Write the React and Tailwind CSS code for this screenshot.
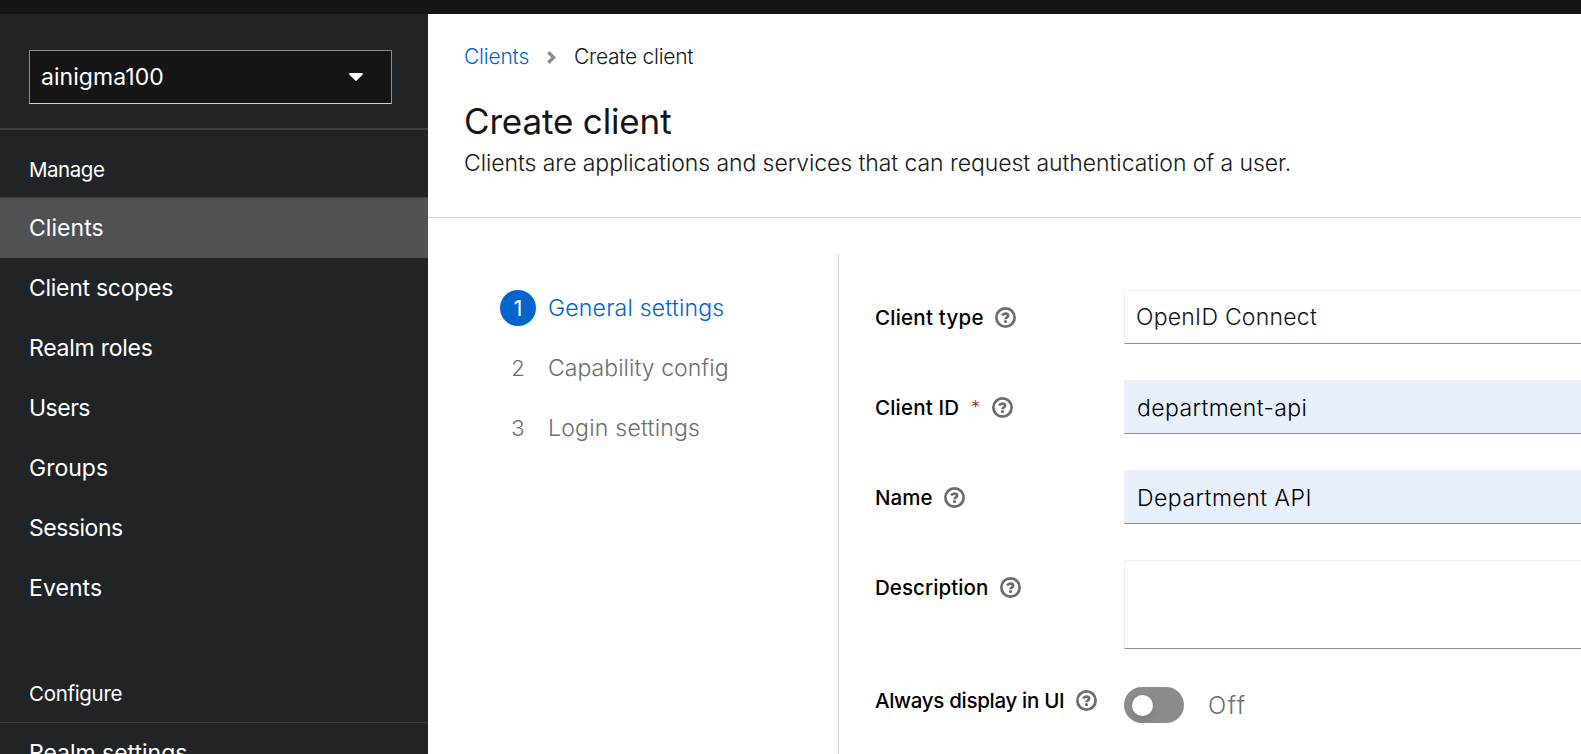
const manageItems = [
  { label: "Clients", tracking: "tracking-[0.05px]", active: true },
  { label: "Client scopes", tracking: "tracking-[-0.28px]" },
  { label: "Realm roles", tracking: "tracking-[-0.25px]" },
  { label: "Users", tracking: "tracking-[-0.5px]" },
  { label: "Groups", tracking: "tracking-[0px]" },
  { label: "Sessions", tracking: "tracking-[-0.48px]" },
  { label: "Events", tracking: "tracking-[0.08px]" },
];

const steps = [
  { n: 1, label: "General settings", tracking: "tracking-[0.21px]", active: true },
  { n: 2, label: "Capability config", tracking: "tracking-[0.05px]" },
  { n: 3, label: "Login settings", tracking: "tracking-[0.24px]" },
];

function HelpIcon() {
  return (
    <svg className="block h-[21px] w-[21px] shrink-0 text-[#6a6e73]" viewBox="0 0 21 21" fill="none">
      <circle cx="10.5" cy="10.5" r="9.15" stroke="currentColor" strokeWidth="2.7" />
      <path
        d="M7.2 8.5C7.8 7.3 8.9 6.7 10.4 6.7C12.1 6.7 13.1 7.5 13.1 8.7C13.1 10.4 10.5 10.3 10.5 12.3"
        stroke="currentColor"
        strokeWidth="2.7"
      />
      <rect x="9" y="13.3" width="3" height="2.8" rx="1" fill="currentColor" />
    </svg>
  );
}

function NavItem({ label, tracking, active }) {
  return (
    <a className={`block h-[60px] shrink-0 pl-[29px] text-[23px] leading-[60px] text-white ${tracking} ${active ? "bg-[#4f5255]" : ""}`}>
      {label}
    </a>
  );
}

function SectionTitle({ children, className }) {
  return (
    <h2 className={`shrink-0 border-b border-[#3c3f42] pl-[29px] text-[20.5px] leading-[30px] text-white ${className}`}>
      {children}
    </h2>
  );
}

function Sidebar() {
  return (
    <nav className="flex w-[428px] shrink-0 flex-col overflow-hidden bg-[#212427]">
      <div className="shrink-0 border-b-2 border-[#3c3f42] pt-[36px] pr-[36px] pb-[24px] pl-[29px]">
        <button className="flex h-[54px] w-full items-center justify-between border border-[#8a8d90] border-b-[#d2d2d2] bg-[#151515] pr-[28px] pl-[11px] text-[23px] leading-[52px] tracking-[0.05px] text-white">
          <span>ainigma100</span>
          <svg className="h-[8px] w-[14px]" viewBox="0 0 14 8">
            <path d="M0.9 0H13.1C13.9 0 14.3 0.9 13.7 1.5L7.7 7.6C7.3 8 6.7 8 6.3 7.6L0.3 1.5C-0.3 0.9 0.1 0 0.9 0Z" fill="#fff" />
          </svg>
        </button>
      </div>
      <SectionTitle className="pt-[25px] pb-[12px] tracking-[-0.46px]">Manage</SectionTitle>
      {manageItems.map((item) => (
        <NavItem key={item.label} {...item} />
      ))}
      <SectionTitle className="mt-[61px] pb-[13px] tracking-[-0.32px]">Configure</SectionTitle>
      <NavItem label="Realm settings" tracking="tracking-[-0.02px]" />
    </nav>
  );
}

function PageHeader() {
  return (
    <header className="h-[204px] shrink-0 border-b border-[#d2d2d2] pt-[28px] pl-[36px]">
      <div className="flex h-[30px] items-center text-[21px] font-light">
        <a className="w-[83px] pb-px leading-[29px] tracking-[-0.2px] text-[#0066cc]">Clients</a>
        <svg className="mr-[18px] h-[13px] w-[9px]" viewBox="0 0 9 13" fill="none">
          <path d="M1.3 1.2L6.7 6.5L1.3 11.8" stroke="#8a8d90" strokeWidth="3.3" />
        </svg>
        <span className="pb-px leading-[29px] tracking-[-0.28px] text-[#151515]">Create client</span>
      </div>
      <h1 className="mt-[26px] text-[35px] leading-[46px] font-normal tracking-[-0.15px] text-[#151515]">Create client</h1>
      <p className="mt-px text-[23px] leading-[36px] font-light tracking-[-0.07px] text-[#151515]">
        Clients are applications and services that can request authentication of a user.
      </p>
    </header>
  );
}

function Steps() {
  return (
    <ol className="flex w-[411px] shrink-0 flex-col gap-[24px] border-r border-[#d2d2d2] pt-[36px] pl-[72px]">
      {steps.map((s) => (
        <li key={s.n} className="flex h-[36px] items-center">
          <span className={`flex h-[36px] w-[36px] items-center justify-center rounded-full text-[22px] leading-[36px] ${s.active ? "bg-[#0066cc] text-white" : "font-light text-[#6a6e73]"}`}>
            {s.n}
          </span>
          <span className={`ml-[12px] text-[23px] leading-[36px] font-light ${s.tracking} ${s.active ? "text-[#0066cc]" : "text-[#6a6e73]"}`}>
            {s.label}
          </span>
        </li>
      ))}
    </ol>
  );
}

function Field({ label, labelClass, required, className = "h-[54px]", children }) {
  return (
    <div className={`flex shrink-0 ${className}`}>
      <div className="flex h-[55px] w-[249px] shrink-0 items-center">
        <label className={`shrink-0 text-[20.5px] leading-[30px] font-medium whitespace-nowrap text-black ${labelClass}`}>{label}</label>
        {required && <span className="w-[21px] shrink-0 text-[18px] leading-[30px] font-light text-[#c9190b]">*</span>}
        <HelpIcon />
      </div>
      {children}
    </div>
  );
}

const control = "min-w-0 flex-1 border border-r-0 border-[#f0f0f0] border-b-[#8a8d90] text-[23px] font-light whitespace-nowrap";

function Form() {
  return (
    <form className="flex min-w-0 flex-1 flex-col gap-[36px] pt-[36px] pl-[36px]">
      <Field label="Client type" labelClass="w-[120px] tracking-[0.24px]">
        <div className={`${control} pl-[11px] leading-[53px] tracking-[0.24px] text-[#151515]`}>OpenID Connect</div>
      </Field>
      <Field label="Client ID" labelClass="w-[96px] tracking-[0.19px]" required>
        <div className={`${control} bg-[#e8f0fe] pl-[12px] leading-[55px] tracking-[0.38px] text-black`}>department-api</div>
      </Field>
      <Field label="Name" labelClass="w-[69px] tracking-[0.05px]">
        <div className={`${control} bg-[#e8f0fe] pl-[12px] leading-[55px] tracking-[0.48px] text-black`}>Department API</div>
      </Field>
      <Field label="Description" labelClass="w-[125px] tracking-[0.07px]" className="h-[89px]">
        <div className={control} />
      </Field>
      <Field label="Always display in UI" labelClass="w-[201px] tracking-[-0.3px]" className="mt-[-12px] h-[55px]">
        <div className="flex items-center pt-[9px]">
          <span className="flex h-[36px] w-[60px] items-center rounded-full bg-[#8a8d90] pl-[8px]">
            <span className="h-[21px] w-[21px] rounded-full bg-white shadow-[0_4px_8px_rgba(3,3,3,0.14)]" />
          </span>
          <span className="ml-[24px] pt-px text-[24px] leading-[36px] font-light tracking-[1.5px] text-[#6a6e73]">Off</span>
        </div>
      </Field>
    </form>
  );
}

export default function App() {
  return (
    <div className="flex h-[754px] w-full flex-col overflow-hidden bg-white font-['Inter',sans-serif]">
      <div className="h-[14px] shrink-0 bg-[#151515]" />
      <div className="flex min-h-0 flex-1">
        <Sidebar />
        <main className="flex min-w-0 flex-1 flex-col">
          <PageHeader />
          <div className="flex min-h-0 flex-1 pt-[36px]">
            <Steps />
            <Form />
          </div>
        </main>
      </div>
    </div>
  );
}
